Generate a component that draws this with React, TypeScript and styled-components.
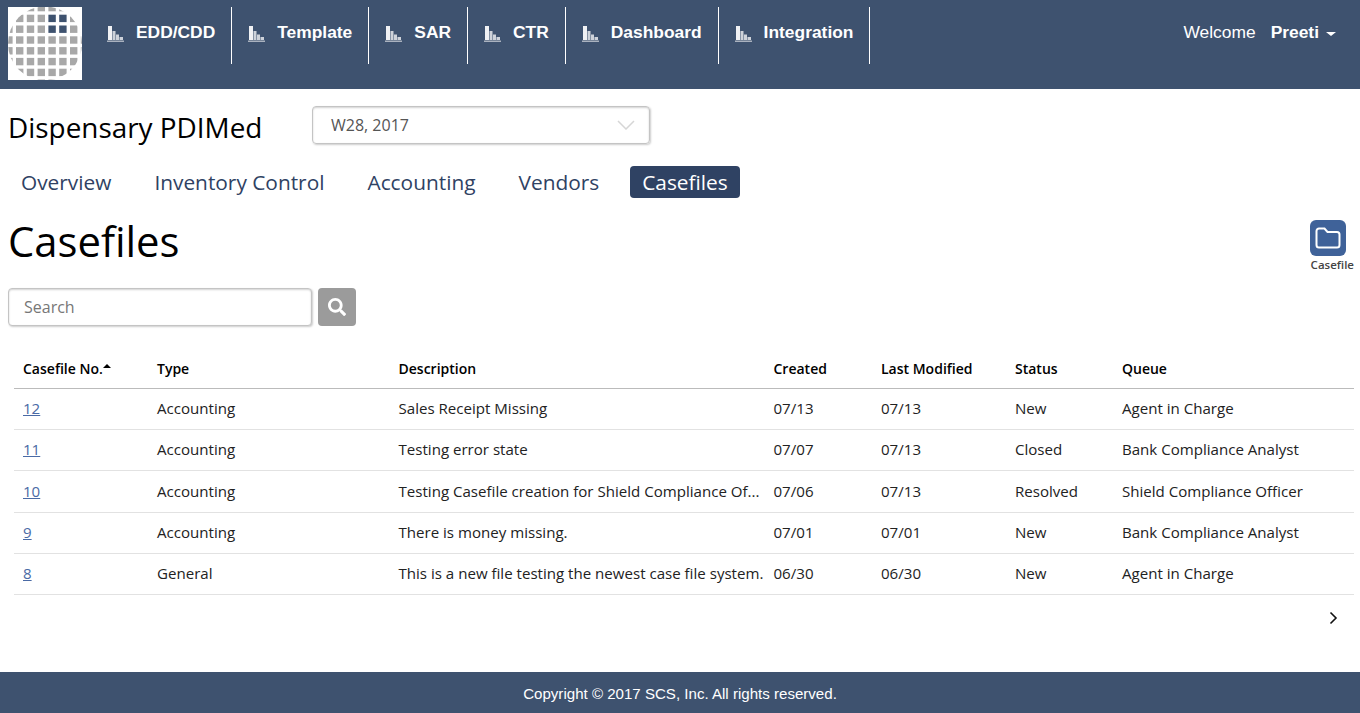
import React from "react";
import styled, { createGlobalStyle } from "styled-components";
import { FaSearch } from "react-icons/fa";

const GlobalStyle = createGlobalStyle`
  html, body {
    margin: 0;
    padding: 0;
    background: #fff;
    font-family: "Open Sans", sans-serif;
  }
`;

const Page = styled.div`
  display: flex;
  flex-direction: column;
  height: 713px;
  overflow: hidden;
`;

const TopBar = styled.header`
  display: flex;
  height: 89px;
  flex: none;
  background: #3e526f;
  padding: 7px 24px 0 8px;
  box-sizing: border-box;
  font-family: "Liberation Sans", Arial, sans-serif;
  color: #fff;
`;

const LogoBox = styled.div`
  width: 74px;
  height: 73px;
  background: #fff;
  margin-right: 9px;
  flex: none;
  overflow: hidden;
`;

const LogoArt = styled.svg`
  display: block;
  filter: blur(0.7px);
`;

const NavList = styled.nav`
  display: flex;
  height: 57px;
`;

const NavItem = styled.a`
  display: flex;
  align-items: flex-start;
  padding: 15px 16px 0 16px;
  border-right: 1px solid #fff;
  font-size: 17.4px;
  font-weight: bold;
  line-height: 21px;
  gap: 11px;
`;

const NavIcon = styled.svg`
  width: 18px;
  height: 17px;
  margin-top: 3px;
  flex: none;
`;

const UserBlock = styled.div`
  margin-left: auto;
  padding-top: 15px;
  font-size: 17.4px;
  line-height: 21px;
  display: flex;
`;

const UserName = styled.b`
  margin-left: 15px;
`;

const Caret = styled.span`
  width: 0;
  height: 0;
  margin: 10px 0 0 7px;
  border-left: 5px solid transparent;
  border-right: 5px solid transparent;
  border-top: 4px solid #fff;
`;

const Content = styled.main`
  flex: 1;
  padding: 0 6px 0 8px;
`;

const TitleRow = styled.div`
  display: flex;
  align-items: flex-start;
  padding-top: 17px;
`;

const ClinicName = styled.h2`
  width: 304px;
  margin: 0;
  font-size: 27.9px;
  font-weight: 400;
  line-height: 42px;
  color: #000;
`;

const PeriodSelect = styled.div`
  width: 338px;
  height: 38px;
  box-sizing: border-box;
  display: flex;
  align-items: center;
  justify-content: space-between;
  padding: 0 14px 0 18px;
  border: 1px solid #c4c4c4;
  border-radius: 4px;
  box-shadow: inset 0 1px 2px rgba(0, 0, 0, 0.18), 1px 1px 2px rgba(0, 0, 0, 0.2);
  font-size: 16px;
  color: #555;
`;

const Tabs = styled.div`
  display: flex;
  gap: 19px;
  margin: 18px 0 0 1px;
  height: 32px;
`;

const Tab = styled.a<{ $active?: boolean }>`
  height: 32px;
  padding: 0 12px;
  font-size: 20.85px;
  line-height: 33px;
  border-radius: 4px;
  color: ${(p) => (p.$active ? "#fff" : "#2f4263")};
  background: ${(p) => (p.$active ? "#2f4263" : "transparent")};
`;

const HeadingRow = styled.div`
  display: flex;
  justify-content: space-between;
  margin-top: 16px;
`;

const PageTitle = styled.h1`
  margin: 0;
  font-size: 41.8px;
  font-weight: 400;
  line-height: 54px;
  color: #000;
`;

const NewCasefile = styled.div`
  display: flex;
  flex-direction: column;
  align-items: flex-start;
  margin-top: 6px;
  font-size: 11.5px;
  font-weight: 600;
  line-height: 15px;
  color: #444;
`;

const NewCasefileIcon = styled.div`
  width: 36px;
  height: 36px;
  margin: 0 0 1px -1px;
  display: flex;
  align-items: center;
  justify-content: center;
  background: #3f6299;
  border-radius: 6px;
`;

const SearchRow = styled.div`
  display: flex;
  gap: 6px;
  margin-top: 16px;
`;

const SearchInput = styled.input`
  width: 304px;
  height: 38px;
  box-sizing: border-box;
  padding: 0 15px;
  border: 1px solid #c4c4c4;
  border-radius: 4px;
  box-shadow: inset 0 1px 2px rgba(0, 0, 0, 0.18), 1px 1px 2px rgba(0, 0, 0, 0.2);
  font-family: inherit;
  font-size: 16px;
  &::placeholder {
    color: #777;
  }
`;

const SearchButton = styled.button`
  width: 38px;
  height: 38px;
  padding: 0;
  border: 0;
  border-radius: 4px;
  background: #9b9b9b;
  color: #fff;
  font-size: 18px;
  display: flex;
  align-items: center;
  justify-content: center;
`;

const Table = styled.table`
  width: 1340px;
  margin: 23px 0 0 6px;
  border-collapse: collapse;
  table-layout: fixed;
  font-size: 15.08px;
  color: #222;
`;

const Th = styled.th<{ $w?: number }>`
  width: ${(p) => (p.$w ? `${p.$w}px` : "auto")};
  height: 39.3px;
  padding: 0 0 0 9px;
  box-sizing: border-box;
  text-align: left;
  font-size: 14px;
  font-weight: 600;
  color: #000;
  border-bottom: 1px solid #bbb;
`;

const Td = styled.td`
  height: 41.3px;
  padding: 0 0 2px 9px;
  box-sizing: border-box;
  border-bottom: 1px solid #e2e2e2;
  white-space: nowrap;
`;

const CaseLink = styled.a`
  color: #4a6aa5;
  text-decoration: underline;
`;

const SortCaret = styled.span`
  display: inline-block;
  width: 0;
  height: 0;
  margin: 0 0 8px 0;
  vertical-align: middle;
  border-left: 4px solid transparent;
  border-right: 4px solid transparent;
  border-bottom: 4px solid #000;
`;

const Pager = styled.div`
  display: flex;
  justify-content: flex-end;
  padding: 16px 16px 0 0;
`;

const Footer = styled.footer`
  height: 41px;
  flex: none;
  background: #3e526f;
  color: #fff;
  font-family: "Liberation Sans", Arial, sans-serif;
  font-size: 15.08px;
  line-height: 44px;
  text-align: center;
`;

const BarsIcon = () => (
  <NavIcon viewBox="0 0 18 17">
    <path fill="#f0f1f4" d="M1 1h4v14H1z" />
    <path fill="#cdd2da" d="M5.500 6h3v9h-3zM9 9.500h3V15H9zM12.500 12H16v3h-3.500z" />
    <path fill="#aab2bf" d="M0 15.500h17V17H0z" />
  </NavIcon>
);

const logoCols = [-2.8, 8, 18.8, 29.6, 40.4, 51.2, 62, 72.8];
const logoRows = [-3.1, 7.7, 18.5, 29.3, 40.1, 50.9, 61.7, 72.5];

const Logo = () => (
  <LogoBox>
    <LogoArt width="74" height="73" viewBox="0 0 74 73">
      <defs>
        <clipPath id="logoClip">
          <circle cx="37" cy="36.500" r="37" />
        </clipPath>
      </defs>
      <g clipPath="url(#logoClip)">
        {logoRows.map((y, r) =>
          logoCols.map((x, c) => (
            <rect
              key={`${r}-${c}`}
              x={x}
              y={y}
              width="7.400"
              height="7.400"
              fill={(r === 1 || r === 2) && (c === 4 || c === 5) ? "#3e526f" : "#a8a8a8"}
            />
          ))
        )}
      </g>
    </LogoArt>
  </LogoBox>
);

const navItems = ["EDD/CDD", "Template", "SAR", "CTR", "Dashboard", "Integration"];
const tabs = ["Overview", "Inventory Control", "Accounting", "Vendors", "Casefiles"];

const columns = [
  { label: "Casefile No.", w: 134 },
  { label: "Type", w: 241.5 },
  { label: "Description", w: 375 },
  { label: "Created", w: 107.5 },
  { label: "Last Modified", w: 134 },
  { label: "Status", w: 107 },
  { label: "Queue" },
];

const rows = [
  ["12", "Accounting", "Sales Receipt Missing", "07/13", "07/13", "New", "Agent in Charge"],
  ["11", "Accounting", "Testing error state", "07/07", "07/13", "Closed", "Bank Compliance Analyst"],
  ["10", "Accounting", "Testing Casefile creation for Shield Compliance Of...", "07/06", "07/13", "Resolved", "Shield Compliance Officer"],
  ["9", "Accounting", "There is money missing.", "07/01", "07/01", "New", "Bank Compliance Analyst"],
  ["8", "General", "This is a new file testing the newest case file system.", "06/30", "06/30", "New", "Agent in Charge"],
];

export default function App() {
  return (
    <Page>
      <GlobalStyle />
      <TopBar>
        <Logo />
        <NavList>
          {navItems.map((item) => (
            <NavItem key={item}>
              <BarsIcon />
              {item}
            </NavItem>
          ))}
        </NavList>
        <UserBlock>
          Welcome
          <UserName>Preeti</UserName>
          <Caret />
        </UserBlock>
      </TopBar>
      <Content>
        <TitleRow>
          <ClinicName>Dispensary PDIMed</ClinicName>
          <PeriodSelect>
            W28, 2017
            <svg width="18" height="10" viewBox="0 0 18 10">
              <path d="M1 1l8 8 8-8" fill="none" stroke="#d6d6d6" strokeWidth="1.500" />
            </svg>
          </PeriodSelect>
        </TitleRow>
        <Tabs>
          {tabs.map((t) => (
            <Tab key={t} $active={t === "Casefiles"}>
              {t}
            </Tab>
          ))}
        </Tabs>
        <HeadingRow>
          <PageTitle>Casefiles</PageTitle>
          <NewCasefile>
            <NewCasefileIcon>
              <svg width="26" height="22" viewBox="0 0 26 22">
                <path
                  d="M1.500 4a2.500 2.500 0 0 1 2.500-2.500h5.500l3 3.500H22a2.500 2.500 0 0 1 2.500 2.500V18a2.500 2.500 0 0 1-2.500 2.500H4A2.500 2.500 0 0 1 1.500 18z"
                  fill="none"
                  stroke="#fff"
                  strokeWidth="2"
                />
              </svg>
            </NewCasefileIcon>
            Casefile
          </NewCasefile>
        </HeadingRow>
        <SearchRow>
          <SearchInput placeholder="Search" />
          <SearchButton>
            <FaSearch />
          </SearchButton>
        </SearchRow>
        <Table>
          <thead>
            <tr>
              {columns.map((c, i) => (
                <Th key={c.label} $w={c.w}>
                  {c.label}
                  {i === 0 && <SortCaret />}
                </Th>
              ))}
            </tr>
          </thead>
          <tbody>
            {rows.map((row) => (
              <tr key={row[0]}>
                {row.map((cell, i) => (
                  <Td key={i}>{i === 0 ? <CaseLink>{cell}</CaseLink> : cell}</Td>
                ))}
              </tr>
            ))}
          </tbody>
        </Table>
        <Pager>
          <svg width="9" height="14" viewBox="0 0 9 14">
            <path d="M1.500 1.500L7 7l-5.500 5.500" fill="none" stroke="#111" strokeWidth="1.600" />
          </svg>
        </Pager>
      </Content>
      <Footer>Copyright © 2017 SCS, Inc. All rights reserved.</Footer>
    </Page>
  );
}
